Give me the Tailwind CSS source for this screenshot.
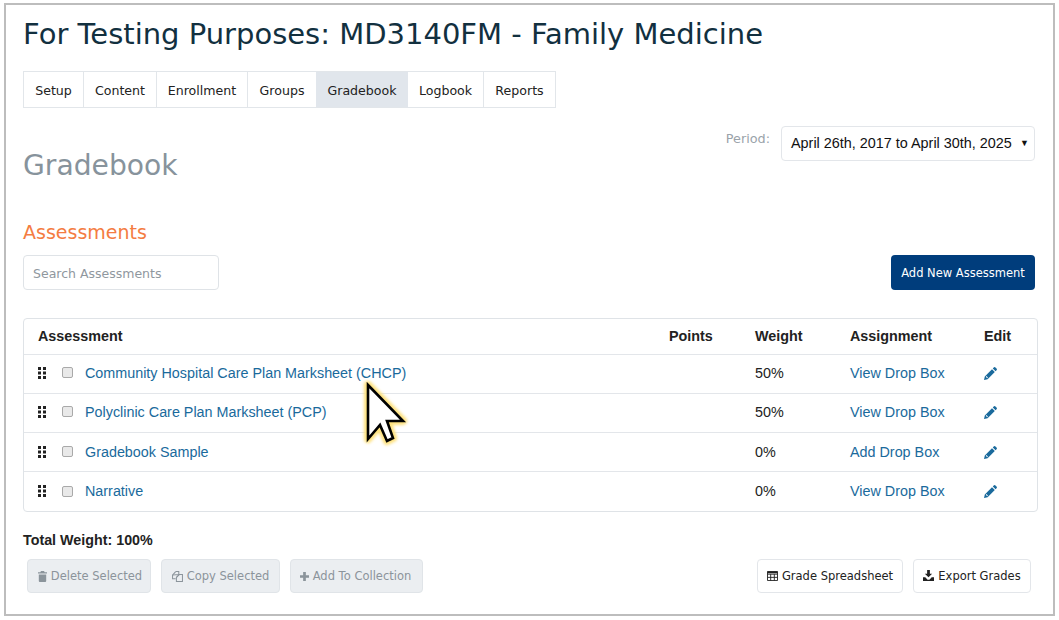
<!DOCTYPE html>
<html lang="en">
<head>
    <meta charset="UTF-8">
    <meta name="viewport" content="width=device-width, initial-scale=1.0">
    <title>Gradebook</title>
    <script src="https://cdn.jsdelivr.net/npm/@tailwindcss/browser@4"></script>
</head>
<body class="bg-white h-[620px] overflow-hidden relative font-['DejaVu_Sans',sans-serif]">
    <div class="ml-1 mt-[3px] w-[1051px] h-[613px] border-2 border-[#bdbdbd] pl-[17px] pr-[17px] pt-[11px] relative">
        <h1 class="text-[29px] leading-[36px] text-[#12303f] font-normal">For Testing Purposes: MD3140FM - Family Medicine</h1>

        <nav class="mt-[19px] flex w-max border border-[#e2e6ea] h-[37px] text-[12.6px] text-[#222]">
            <a class="w-[60px] flex items-center justify-center pt-[3px] border-r border-[#e2e6ea]">Setup</a>
            <a class="w-[73px] flex items-center justify-center pt-[3px] border-r border-[#e2e6ea]">Content</a>
            <a class="w-[91px] flex items-center justify-center pt-[3px] border-r border-[#e2e6ea]">Enrollment</a>
            <a class="w-[68px] flex items-center justify-center pt-[3px]">Groups</a>
            <a class="w-[92px] flex items-center justify-center pt-[3px] bg-[#e1e6ec]">Gradebook</a>
            <a class="w-[76px] flex items-center justify-center pt-[3px] border-r border-[#e2e6ea]">Logbook</a>
            <a class="w-[71px] flex items-center justify-center pt-[3px]">Reports</a>
        </nav>

        <div class="flex justify-between mt-[18px] pr-[1px]">
            <h2 class="mt-[22px] text-[28.2px] leading-[36px] text-[#87939c] font-normal">Gradebook</h2>
            <div class="flex items-start gap-[11px]">
                <span class="mt-[4px] text-[12.8px] leading-[18px] text-[#9aa3aa]">Period:</span>
                <div class="w-[254px] h-[35px] border border-[#e3e6ea] rounded-[4px] flex items-center justify-between pl-[9px] pr-[5px] text-[14.4px] text-[#111] font-['Liberation_Sans',sans-serif]">
                    <span>April 26th, 2017 to April 30th, 2025</span>
                    <span class="text-[9px]">▼</span>
                </div>
            </div>
        </div>

        <h3 class="mt-[35px] text-[19px] leading-[26px] text-[#f47c42] font-normal">Assessments</h3>

        <div class="flex justify-between items-center mt-[10px] pr-[1px]">
            <div class="w-[196px] h-[35px] border border-[#dfe3e7] rounded-[4px] flex items-center pl-[9px] pt-[3px] text-[12.5px] text-[#8f979e]">Search Assessments</div>
            <button class="w-[144px] h-[35px] bg-[#003d7c] rounded-[4px] pt-[2px] text-[11.5px] text-white">Add New Assessment</button>
        </div>

        <div class="mt-[28px] w-[1015px] border border-[#dfe3e7] rounded-[4px] font-['Liberation_Sans',sans-serif] text-[14.35px]">
            <table class="w-full table-fixed border-collapse">
                <colgroup>
                    <col class="w-[645px]">
                    <col class="w-[86px]">
                    <col class="w-[95px]">
                    <col class="w-[134px]">
                    <col>
                </colgroup>
                <thead>
                    <tr class="h-[35px] text-left text-[#222]">
                        <th class="pl-[14px] pt-[2px] font-bold">Assessment</th>
                        <th class="pt-[2px] font-bold">Points</th>
                        <th class="pt-[2px] font-bold">Weight</th>
                        <th class="pt-[2px] font-bold">Assignment</th>
                        <th class="pt-[2px] font-bold">Edit</th>
                    </tr>
                </thead>
                <tbody id="rows"></tbody>
            </table>
        </div>

        <p class="mt-[19px] text-[14.3px] leading-[18px] font-bold text-[#222] font-['Liberation_Sans',sans-serif]">Total Weight: 100%</p>

        <div class="mt-[10px] flex justify-between pl-[4px] pr-[5px] text-[11.5px]">
            <div class="flex gap-[10px] text-[#8b949b]">
                <button class="w-[124px] h-[34px] bg-[#ebeef1] border border-[#e0e4e8] rounded-[4px] flex items-center justify-center gap-[4px] pt-[2px] pl-[2px]">
                    <svg class="w-[9px] h-[11px] -mt-[2px]" viewBox="0 0 9 11" fill="#8b949b"><path d="M3 0h3l.7 1.200H9v1.300H0V1.200h2.300zM.8 3.400h7.400v6.600a1 1 0 0 1-1 1H1.800a1 1 0 0 1-1-1z"/></svg>
                    Delete Selected
                </button>
                <button class="w-[119px] h-[34px] bg-[#ebeef1] border border-[#e0e4e8] rounded-[4px] flex items-center justify-center gap-[4px] pt-[2px]">
                    <svg class="w-[11px] h-[11px] -mt-[2px]" viewBox="0 0 12 12" fill="none" stroke="#8b949b" stroke-width="1.1"><path d="M4 .6h3.400v3.400H4L.6 4.500V8.500H4"/><path d="M8 3.800h3.400v7.600H4.800V7z"/><path d="M4 .6.6 4.500M8 3.800 4.800 7"/></svg>
                    Copy Selected
                </button>
                <button class="w-[133px] h-[34px] bg-[#ebeef1] border border-[#e0e4e8] rounded-[4px] flex items-center justify-center gap-[4px] pt-[2px] pr-[2px]">
                    <svg class="w-[9px] h-[9px] -mt-[2px]" viewBox="0 0 10 10" fill="#8b949b"><path d="M3.500 0h3v3.500H10v3H6.500V10h-3V6.500H0v-3h3.500z"/></svg>
                    Add To Collection
                </button>
            </div>
            <div class="flex gap-[10px] text-[#222]">
                <button class="w-[146px] h-[34px] border border-[#e3e6ea] rounded-[4px] flex items-center justify-center gap-[4px] pt-[2px]">
                    <svg class="w-[11px] h-[10px] -mt-[2px]" viewBox="0 0 12 11" fill="none" stroke="#222" stroke-width="1"><path d="M.5.5h11v10H.5zM.5 3.500h11M.5 7h11M4 3.500v7M8 3.500v7"/><path d="M.5 1.500h11" stroke-width="2"/></svg>
                    Grade Spreadsheet
                </button>
                <button class="w-[118px] h-[34px] border border-[#e3e6ea] rounded-[4px] flex items-center justify-center gap-[4px] pt-[2px]">
                    <svg class="w-[11px] h-[11px] -mt-[3px]" viewBox="0 0 12 12" fill="#222"><path d="M4.500 0h3v4H10L6 8 2 4h2.500zM0 8h2.500L5 10.500h2L9.500 8H12v4H0z"/></svg>
                    Export Grades
                </button>
            </div>
        </div>
    </div>

    <!-- курсор поверх таблицы -->
    <svg class="absolute left-[358px] top-[376px] w-[60px] h-[76px]" viewBox="0 0 60 76">
        <defs><filter id="glow" x="-30%" y="-30%" width="160%" height="160%"><feGaussianBlur stdDeviation="1.8"/></filter></defs>
        <polygon points="10,9 45,45 29,45 35,62 29,65 22,49 10,63" fill="#fde68a" stroke="#fde07a" stroke-width="8" stroke-linejoin="round" filter="url(#glow)"/>
        <polygon points="10,9 45,45 29,45 35,62 29,65 22,49 10,63" fill="#fff" stroke="#000" stroke-width="2.600"/>
    </svg>

    <script>
        const assessments = [
            ['Community Hospital Care Plan Marksheet (CHCP)', '50%', 'View Drop Box', 'h-[39px]'],
            ['Polyclinic Care Plan Marksheet (PCP)', '50%', 'View Drop Box', 'h-[39px]'],
            ['Gradebook Sample', '0%', 'Add Drop Box', 'h-[39px] [&>td]:pt-[2px]'],
            ['Narrative', '0%', 'View Drop Box', 'h-[40px] [&>td]:pt-[1px]']
        ];
        const dots = `<svg class="w-[8px] h-[12px]" viewBox="0 0 8 12" fill="#222"><path d="M0 0h3v3H0zM5 0h3v3H5zM0 4.500h3v3H0zM5 4.500h3v3H5zM0 9h3v3H0zM5 9h3v3H5z"/></svg>`;
        const pencil = `<svg class="w-[13px] h-[13px] -mt-[1px]" viewBox="0 0 13 13" fill="#1a6a9c"><path d="M0 13l.8-3.600L8 2.200 10.800 5 3.600 12.200zM1.800 9.800l1.400 1.400.7-.7-1.400-1.400zM8.800 1.400l.9-.9a1.300 1.300 0 0 1 1.800 0l1 1a1.300 1.300 0 0 1 0 1.800l-.9.900z"/></svg>`;
        document.getElementById('rows').innerHTML = assessments.map(a => `
            <tr class="border-t border-[#e3e6ea] ${a[3]} text-[#222]">
                <td class="pl-[14px]">
                    <div class="flex items-center">
                        <span class="w-[24px] -mt-[1px]">${dots}</span>
                        <span class="w-[11px] h-[11px] -mt-[1px] rounded-[2px] border border-[#a9a9a9] bg-[#e9e9e9]"></span>
                        <a class="ml-[12px] text-[#1a6a9c]">${a[0]}</a>
                    </div>
                </td>
                <td></td>
                <td>${a[1]}</td>
                <td><a class="text-[#1a6a9c]">${a[2]}</a></td>
                <td>${pencil}</td>
            </tr>`).join('');
    </script>
</body>
</html>
